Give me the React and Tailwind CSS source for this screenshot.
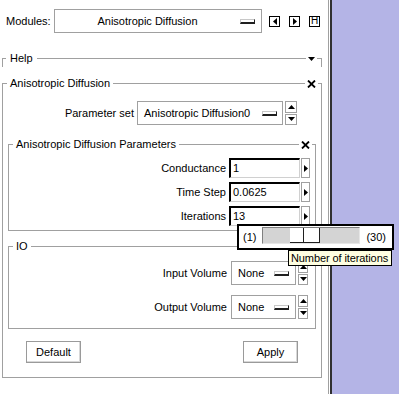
import React from 'react';

// small filled triangle used by all the motif-style arrow buttons
function Tri({ dir = 'right', w = 4, h = 7 }) {
  const pts = {
    right: `0,0 ${w},${h / 2} 0,${h}`,
    left: `${w},0 0,${h / 2} ${w},${h}`,
    up: `0,${h} ${w / 2},0 ${w},${h}`,
    down: `0,0 ${w},0 ${w / 2},${h}`,
  }[dir];
  return (
    <svg width={w} height={h} viewBox={`0 0 ${w} ${h}`} className="block">
      <polygon points={pts} fill="#000" />
    </svg>
  );
}

function Cross() {
  return (
    <svg width="9" height="8" viewBox="0 0 9 8" className="block">
      <path d="M1 0.5L8 7.5M8 0.5L1 7.5" stroke="#000" strokeWidth="1.8" />
    </svg>
  );
}

function Indicator({ className = '' }) {
  return (
    <div
      className={`w-[15px] h-[5px] bg-white border-t border-l border-r border-b-2 border-t-[#c8c8c8] border-l-[#c8c8c8] border-r-[#202020] border-b-[#202020] ${className}`}
    />
  );
}

function NavButton({ children }) {
  return (
    <div className="w-[11px] h-[11px] border border-black bg-white flex items-center justify-center">
      {children}
    </div>
  );
}

function Spin({ className = '' }) {
  return (
    <div className={`h-full flex flex-col gap-[1px] ${className}`}>
      <div className="flex-1 border border-[#a0a0a0] bg-white flex items-center justify-center">
        <Tri dir="up" w={7} h={4} />
      </div>
      <div className="flex-1 border border-[#a0a0a0] bg-white flex items-center justify-center">
        <Tri dir="down" w={7} h={4} />
      </div>
    </div>
  );
}

function Legend({ children }) {
  return <span className="absolute left-[4px] -top-[7px] bg-white px-[3px]">{children}</span>;
}

function CloseMark() {
  return (
    <span className="absolute right-[3px] -top-[4px] bg-white px-[2px]">
      <Cross />
    </span>
  );
}

function NumberRow({ label, value }) {
  return (
    <div className="h-[20px] flex items-center justify-end">
      <span className="mr-[3px]">{label}</span>
      <div className="w-[71px] h-full bg-white border-t-2 border-l-2 border-r border-b border-t-black border-l-black border-r-[#d0d0d0] border-b-[#d0d0d0] flex items-center pl-[2px]">
        {value}
      </div>
      <div className="ml-[1px] w-[9px] h-full border border-[#a0a0a0] bg-white flex items-center justify-center">
        <Tri dir="right" w={4} h={7} />
      </div>
    </div>
  );
}

function VolumeRow({ label }) {
  return (
    <div className="h-[24px] flex items-center justify-end">
      <span className="mr-[4px]">{label}</span>
      <div className="w-[65px] h-full border border-[#a0a0a0] bg-white flex items-center justify-between pl-[6px]">
        <span>None</span>
        <Indicator className="mr-[6px]" />
      </div>
      <Spin className="ml-[2px] w-[10px]" />
    </div>
  );
}

export default function App() {
  return (
    <div className="relative w-[399px] h-[394px] flex bg-white overflow-hidden font-['Liberation_Sans',Arial,sans-serif] text-[11px] leading-[13px] text-black">
      <div className="w-[328px] flex flex-col">
        {/* Modules */}
        <div className="mt-[9px] h-[24px] flex items-center">
          <span className="ml-[6px] w-[48px]">Modules:</span>
          <div className="w-[208px] h-full border border-[#a0a0a0] flex items-center">
            <span className="flex-1 text-center">Anisotropic Diffusion</span>
            <Indicator className="mr-[6px]" />
          </div>
          <div className="ml-[7px] flex gap-[9px]">
            <NavButton>
              <Tri dir="left" w={4} h={7} />
            </NavButton>
            <NavButton>
              <Tri dir="right" w={4} h={7} />
            </NavButton>
            <NavButton>
              <span className="text-[10px] leading-none">H</span>
            </NavButton>
          </div>
        </div>

        {/* Help (collapsed) */}
        <div className="relative mt-[25px] ml-[2px] w-[320px] h-[9px] border-t border-x border-[#a0a0a0]">
          <span className="absolute left-[3px] -top-[7px] bg-white px-[4px]">Help</span>
          <span className="absolute right-[4px] -top-[2px] bg-white px-[2px]">
            <Tri dir="down" w={7} h={4} />
          </span>
        </div>

        {/* Anisotropic Diffusion */}
        <div className="relative mt-[16px] ml-[2px] w-[320px] h-[295px] border border-[#a0a0a0] flex flex-col">
          <Legend>Anisotropic Diffusion</Legend>
          <CloseMark />

          <div className="mt-[17px] h-[24px] flex items-center justify-end pr-[24px]">
            <span className="mr-[3px]">Parameter set</span>
            <div className="w-[146px] h-full border border-[#a0a0a0] bg-white flex items-center justify-between pl-[6px]">
              <span>Anisotropic Diffusion0</span>
              <Indicator className="mr-[5px]" />
            </div>
            <Spin className="ml-[2px] w-[12px]" />
          </div>

          <div className="relative mt-[19px] ml-[5px] w-[308px] h-[87px] border border-[#a0a0a0] flex flex-col gap-[4px] pt-[13px] pr-[5px]">
            <Legend>Anisotropic Diffusion Parameters</Legend>
            <CloseMark />
            <NumberRow label="Conductance" value="1" />
            <NumberRow label="Time Step" value="0.0625" />
            <NumberRow label="Iterations" value="13" />
          </div>

          <div className="relative mt-[15px] ml-[5px] w-[308px] h-[83px] border border-[#a0a0a0] flex flex-col gap-[10px] pt-[14px] pr-[7px]">
            <Legend>IO</Legend>
            <VolumeRow label="Input Volume" />
            <VolumeRow label="Output Volume" />
          </div>

          <div className="mt-[12px] flex justify-between px-[23px]">
            <button className="w-[55px] h-[22px] border border-[#9a9a9a] bg-white shadow-[inset_-1px_-1px_0_#d8d8d8]">
              Default
            </button>
            <button className="w-[55px] h-[22px] border border-[#9a9a9a] bg-white shadow-[inset_-1px_-1px_0_#d8d8d8]">
              Apply
            </button>
          </div>
        </div>
      </div>

      {/* pane divider + empty side */}
      <div className="w-px bg-[#a0a0a0]" />
      <div className="w-px bg-white" />
      <div className="w-[2px] bg-[#303030]" />
      <div className="flex-1 bg-[#b4b4e6]" />

      {/* slider popup for Iterations */}
      <div className="absolute left-[237px] top-[224px] w-[157px] h-[26px] border-2 border-black bg-white flex items-center pl-[4px]">
        <span>(1)</span>
        <div className="ml-[6px] self-start mt-[1px] w-[98px] h-[17px] bg-[#d4d4d4] border border-t-[#808080] border-l-[#808080] border-r-[#e6e6e6] border-b-[#e6e6e6] flex items-center">
          <div className="ml-[27px] w-[30px] h-[15px] bg-white border-r border-b border-[#202020] flex">
            <div className="w-[14px] h-full border-r border-[#202020]" />
          </div>
        </div>
        <span className="ml-[6px]">(30)</span>
      </div>

      {/* tooltip */}
      <div className="absolute left-[288px] top-[250px] w-[104px] h-[16px] bg-[#ffffe1] border border-black flex items-center pl-[2px] whitespace-nowrap tracking-[-0.1px]">
        Number of iterations
      </div>
    </div>
  );
}
